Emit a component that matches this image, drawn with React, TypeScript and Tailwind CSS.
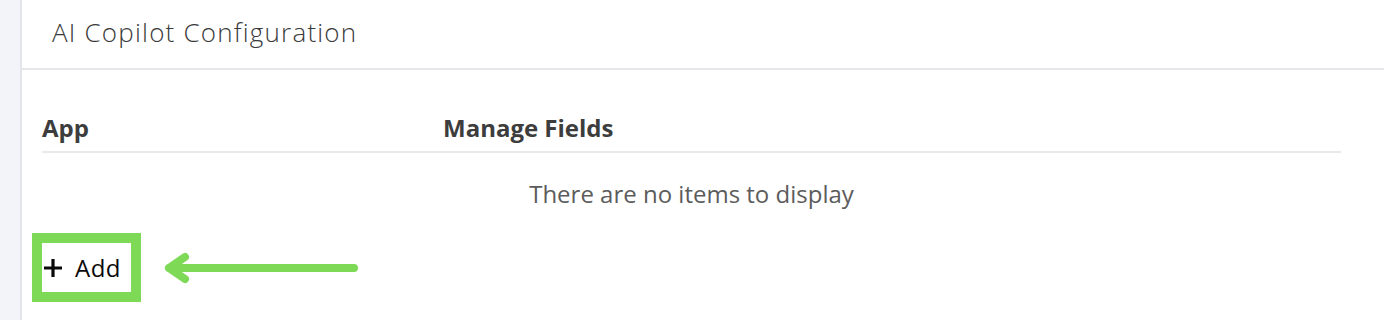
export default function App() {
  return (
    <div className="flex h-[320px] w-full bg-white font-['Open_Sans',sans-serif] overflow-hidden">
      {/* Left rail */}
      <div className="w-[22px] shrink-0 bg-[#f3f4f9] border-r-2 border-[#e4e5ea]" />

      <div className="flex-1 flex flex-col">
        {/* Header */}
        <div className="h-[70px] shrink-0 pl-[30px] pt-[16px] border-b-2 border-[#e6e6eb]">
          <h1 className="text-[26px] leading-[32px] font-light text-[#3a3a3a] tracking-[1.2px]">AI Copilot Configuration</h1>
        </div>

        {/* Table */}
        <div className="pl-[20px] pr-[43px]">
          <div className="flex pt-[42px] pb-[7px] border-b-2 border-[#e8e8ed] text-[24px] font-bold text-[#3d3d3d] leading-[32px]">
            <div className="w-[401px]">App</div>
            <div>Manage Fields</div>
          </div>
          <div className="pt-[25px] text-center text-[24px] leading-[32px] text-[#5c5c5c]">
            There are no items to display
          </div>
        </div>

        {/* Add + annotation */}
        <div className="flex items-center pl-[10px] mt-[23px]">
          <div className="border-[10px] border-[#7ed957] w-[109px] h-[69px] flex items-center pl-[1px]">
            <button className="flex items-center gap-[12px] text-[24px] text-[#0a0a0a] leading-[32px] tracking-[0.5px]">
              <svg width="20" height="20" viewBox="0 0 20 20">
                <path d="M10 1v18M1 10h18" stroke="#0a0a0a" strokeWidth="3.2" />
              </svg>
              Add
            </button>
          </div>
          <svg width="200" height="40" viewBox="0 0 200 40" className="ml-[22px]">
            <path
              d="M191 20H6M22 9L6 20l16 11"
              fill="none"
              stroke="#7ed957"
              strokeWidth="8"
              strokeLinecap="round"
              strokeLinejoin="round"
            />
          </svg>
        </div>
      </div>
    </div>
  );
}
